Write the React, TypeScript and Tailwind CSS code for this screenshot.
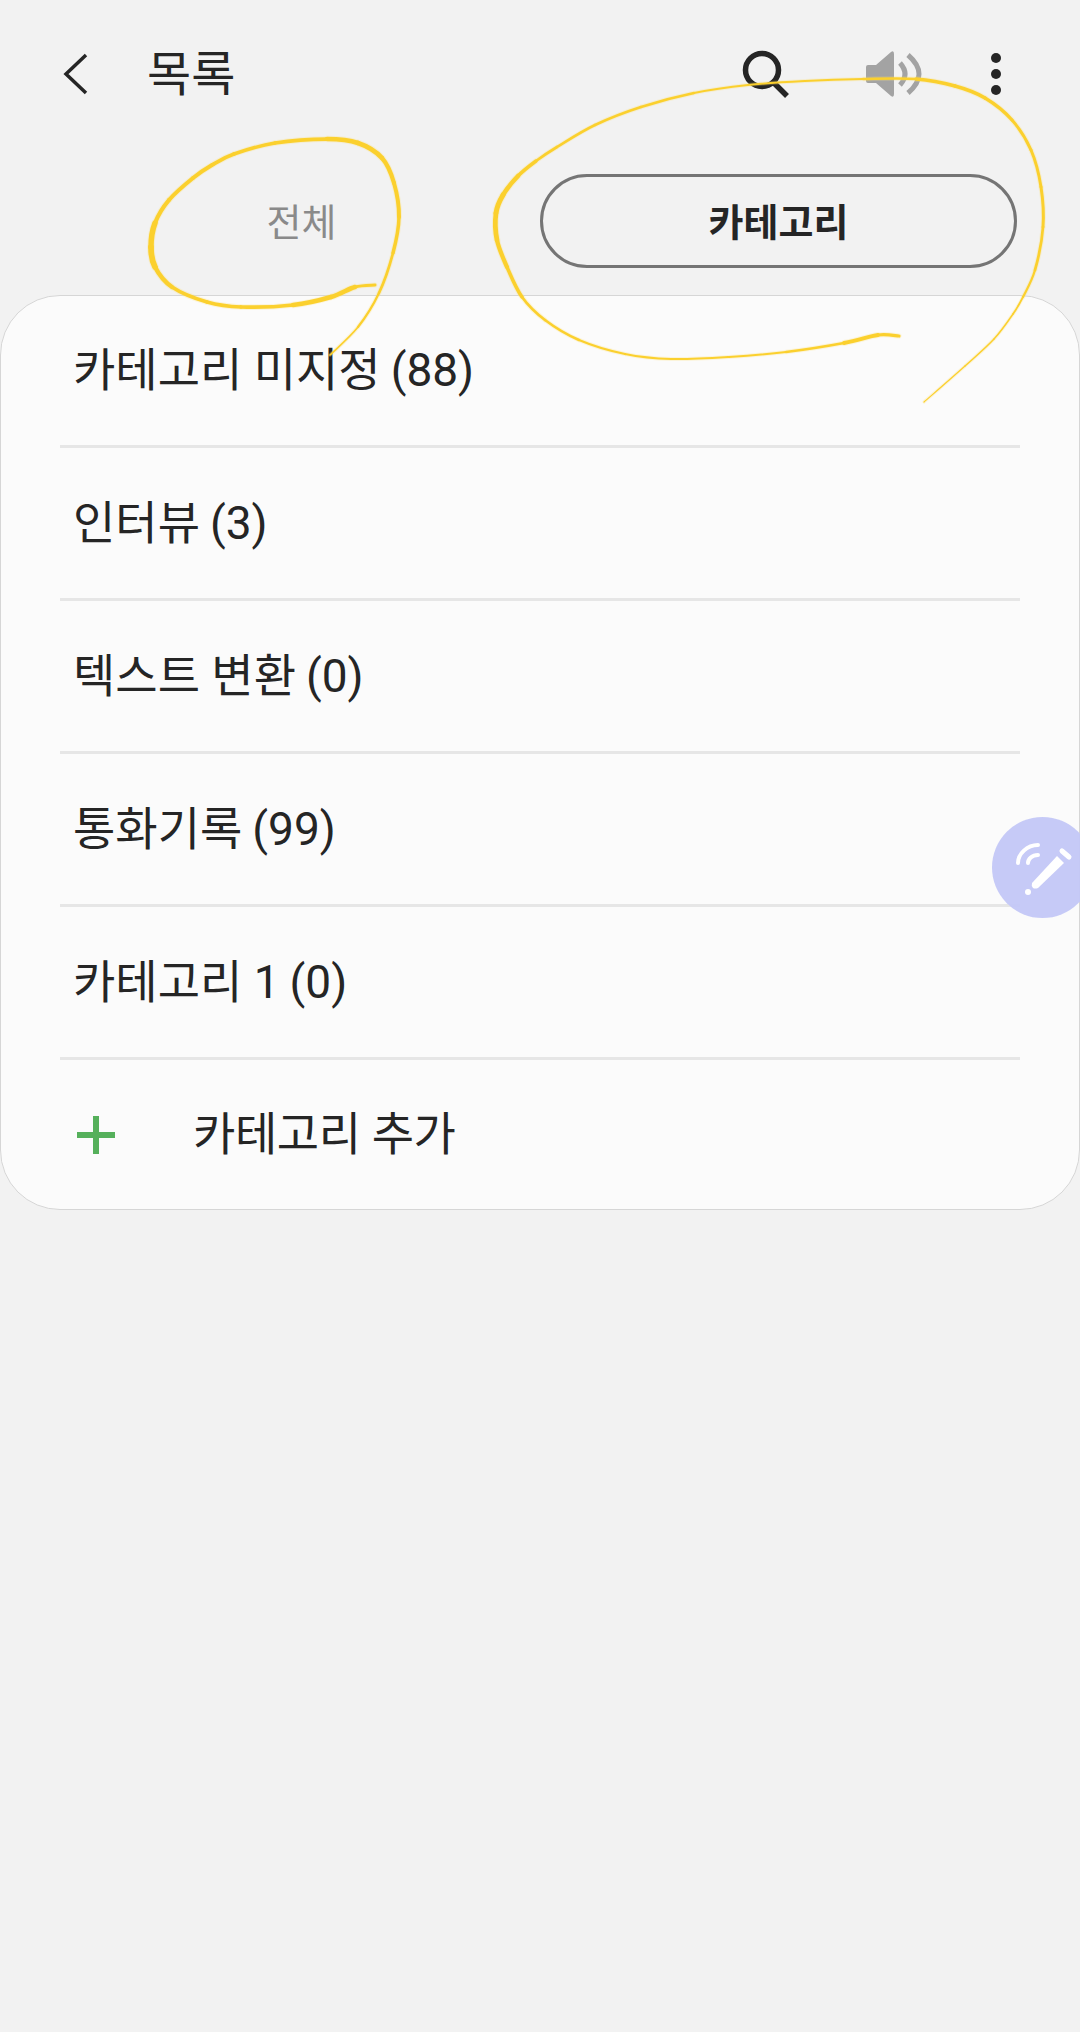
const categories = [
  ['카테고리 미지정', '(88)'],
  ['인터뷰', '(3)'],
  ['텍스트 변환', '(0)'],
  ['통화기록', '(99)'],
  ['카테고리 1', '(0)'],
];

type Pt = [number, number, number];

const leftStroke: Pt[] = [
  [375, 285, 2], [355, 287, 4], [331, 297, 5], [293, 305, 4], [241, 307, 3.5], [207, 302, 3.5], [172, 287, 4],
  [155, 267, 5], [151, 247, 6.5], [155, 223, 4.5], [169, 200, 4], [193, 178, 4], [212, 165, 4], [234, 154, 3.5], [275, 143, 3.5],
  [327, 139, 4], [358, 143, 5], [382, 158, 4.5], [394, 183, 4], [399, 217, 4], [393, 253, 3], [379, 293, 2.5],
  [358, 327, 2], [330, 355, 1.5],
];

const rightStroke: Pt[] = [
  [899, 336, 1.5], [878, 335, 5], [844, 343, 3], [786, 352, 2], [729, 357, 2], [671, 359, 2], [625, 354, 2],
  [579, 340, 2.5], [545, 320, 2.5], [522, 297, 3], [507, 267, 4], [497, 240, 4.5], [496, 213, 5], [503, 195, 5],
  [518, 176, 4], [536, 161, 3], [557, 147, 2.5], [595, 125, 2.5], [641, 107, 2.5], [694, 93, 2.5], [748, 85, 2], [805, 81, 2],
  [863, 79, 2], [916, 79, 3], [955, 86, 4], [985, 98, 3.5], [1012, 120, 3], [1031, 150, 3], [1041, 187, 3],
  [1043, 227, 3], [1035, 270, 2.5], [1023, 297, 2], [1013, 314, 1.5], [994, 339, 1.5], [965, 366, 1.5], [924, 402, 1],
];

// one bezier piece per point pair so the pen width can change along the line
function segments(pts: Pt[]) {
  return pts.slice(0, -1).map((p, i) => {
    const prev = pts[Math.max(i - 1, 0)];
    const next = pts[i + 1];
    const after = pts[Math.min(i + 2, pts.length - 1)];
    const c1x = p[0] + (next[0] - prev[0]) / 6;
    const c1y = p[1] + (next[1] - prev[1]) / 6;
    const c2x = next[0] - (after[0] - p[0]) / 6;
    const c2y = next[1] - (after[1] - p[1]) / 6;
    return {
      d: `M${p[0]} ${p[1]}C${c1x} ${c1y} ${c2x} ${c2y} ${next[0]} ${next[1]}`,
      w: (p[2] + next[2]) / 2,
    };
  });
}

function PenLine({ pts }: { pts: Pt[] }) {
  const parts = segments(pts);
  return (
    <>
      <g opacity="0.25">
        {parts.map((s, i) => (
          <path key={i} d={s.d} fill="none" stroke="#fbe27a" strokeWidth={s.w + 2} strokeLinecap="round" />
        ))}
      </g>
      {parts.map((s, i) => (
        <path key={i} d={s.d} fill="none" stroke="#fbd02e" strokeWidth={s.w} strokeLinecap="round" />
      ))}
    </>
  );
}

function Header() {
  return (
    <div className="flex h-[148px] items-center pl-[60px] pr-[79px]">
      <svg width="30" height="44" viewBox="0 0 30 44" className="mr-[55px] ml-[2px] -mt-[1px]">
        <path d="M24 3 L4 22 L24 41" fill="none" stroke="#252525" strokeWidth="3.5" />
      </svg>
      <div className="mt-[1px] text-[48px] leading-none text-[#252525]">목록</div>
      <div className="ml-auto flex items-center">
        <svg width="50" height="50" viewBox="0 0 50 50" className="mr-[74px]">
          <circle cx="21" cy="21" r="16.5" fill="none" stroke="#252525" strokeWidth="5.5" />
          <path d="M32 33 L46 47" stroke="#252525" strokeWidth="5.5" fill="none" />
        </svg>
        <svg width="58" height="46" viewBox="0 0 58 46" className="mr-[68px]">
          <path
            d="M3 14 H11 L26 1 Q29 -1 29 3 V43 Q29 47 26 45 L11 32 H3 Q1 32 1 30 V16 Q1 14 3 14 Z"
            fill="#a3a3a3"
          />
          <path d="M35 12 Q45 23 35 34" fill="none" stroke="#a3a3a3" strokeWidth="5" />
          <path d="M43 4 Q65 23 43 42" fill="none" stroke="#a3a3a3" strokeWidth="5" />
        </svg>
        <div className="flex flex-col gap-[6px]">
          <div className="h-[10px] w-[10px] rounded-full bg-[#252525]" />
          <div className="h-[10px] w-[10px] rounded-full bg-[#252525]" />
          <div className="h-[10px] w-[10px] rounded-full bg-[#252525]" />
        </div>
      </div>
    </div>
  );
}

function Tabs() {
  return (
    <div className="flex h-[147px] items-start gap-[3px] pl-[66px] pr-[63px] pt-[26px]">
      <div className="flex h-[94px] flex-1 items-center justify-center pt-[4px] text-[38px] text-[#8a8a8a]">전체</div>
      <div className="flex h-[94px] flex-1 items-center justify-center rounded-full border-[3px] border-[#757575] pt-[4px] text-[38px] font-bold text-[#252525]">
        카테고리
      </div>
    </div>
  );
}

export default function App() {
  return (
    <div className="relative h-[2032px] w-[1080px] overflow-hidden bg-[#f2f2f2] font-[Roboto,'Noto_Sans_CJK_KR',sans-serif]">
      <Header />
      <Tabs />
      <div className="h-[915px] rounded-[60px] border border-[#d6d6d6] bg-[#fbfbfb]">
        <div className="-mt-px">
          {categories.map(([name, count]) => (
            <div key={name} className="mx-[59px] flex h-[153px] items-center border-b-[3px] border-[#e6e6e6] pl-[13px] text-[46px] text-[#252525]">
              <span>{name}</span>
              <span className="ml-[10px]">{count}</span>
            </div>
          ))}
        </div>
        <div className="flex h-[149px] items-center pl-[76px] text-[46px] text-[#252525]">
          <svg width="38" height="38" viewBox="0 0 38 38" className="mr-[78px]">
            <path d="M0 19 H38 M19 0 V38" stroke="#55b05b" strokeWidth="6" fill="none" />
          </svg>
          <span className="tracking-[-0.4px]">카테고리 추가</span>
        </div>
      </div>

      {/* floating pen button */}
      <div className="absolute left-[992px] top-[817px] flex h-[101px] w-[101px] items-center justify-center rounded-full bg-[#c3c7f7]/95">
        <svg width="60" height="60" viewBox="0 0 60 60" className="ml-[5px] mt-[5px]">
          <path d="M3 23 C3 14 12 5 23 5" fill="none" stroke="#fff" strokeWidth="4" strokeLinecap="round" />
          <path d="M13 23 C13 19 17 15 23 15" fill="none" stroke="#fff" strokeWidth="4" strokeLinecap="round" />
          <path d="M17 43 L42 16 L49 23 L23 48 Q20 49 18 48 Q16 46 17 43 Z" fill="#fff" />
          <path d="M47 11 L54 17" stroke="#fff" strokeWidth="5" strokeLinecap="round" fill="none" />
          <circle cx="13" cy="52" r="3" fill="#fff" />
        </svg>
      </div>

      {/* hand drawn marks over the screen */}
      <svg width="1080" height="2032" className="pointer-events-none absolute inset-0">
        <PenLine pts={leftStroke} />
        <PenLine pts={rightStroke} />
      </svg>
    </div>
  );
}
